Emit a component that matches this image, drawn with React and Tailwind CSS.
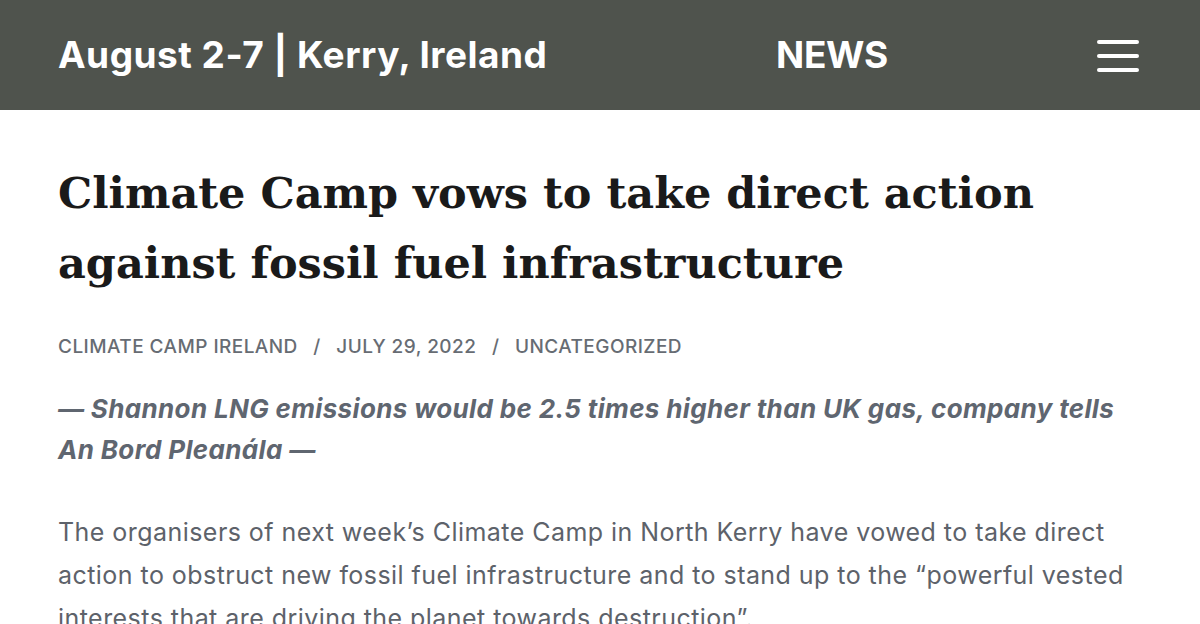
import React from "react";

const Hamburger = () => (
  <svg width="42" height="34" viewBox="0 0 42 34" fill="none">
    <line x1="2" y1="4" x2="40" y2="4" stroke="white" strokeWidth="4" strokeLinecap="round" />
    <line x1="2" y1="18" x2="40" y2="18" stroke="white" strokeWidth="4" strokeLinecap="round" />
    <line x1="2" y1="32" x2="40" y2="32" stroke="white" strokeWidth="4" strokeLinecap="round" />
  </svg>
);

export default function App() {
  return (
    <div className="w-[1200px] h-[624px] overflow-hidden bg-white font-['Inter',sans-serif]">
      {/* Header */}
      <header className="h-[110px] bg-[#4f534d] flex items-center px-[58px] text-white">
        <div className="text-[37px] font-bold tracking-[0.5px] w-[718px]">August 2-7 | Kerry, Ireland</div>
        <div className="text-[37px] font-bold tracking-[-0.3px]">NEWS</div>
        <div className="ml-auto mr-[3px]">
          <Hamburger />
        </div>
      </header>

      {/* Article */}
      <main className="px-[58px] pt-[48px]">
        <h1 className="font-['DejaVu_Serif',serif] font-bold text-[43px] leading-[70px] text-[#1a1a1a]">
          Climate Camp vows to take direct action
          <br />
          against fossil fuel infrastructure
        </h1>

        <div className="mt-[35px] text-[19px] font-medium text-[#676c73] uppercase tracking-[0.45px]">
          Climate Camp Ireland <span className="mx-[10px]">/</span> July 29, 2022{" "}
          <span className="mx-[10px]">/</span> Uncategorized
        </div>

        <p className="mt-[26px] text-[26px] leading-[41px] font-bold italic text-[#5f6670] tracking-[0.35px]">
          — Shannon LNG emissions would be 2.5 times higher than UK gas, company tells
          <br />
          An Bord Pleanála —
        </p>

        <p className="mt-[41px] text-[25px] leading-[43px] text-[#5d626a] tracking-[0.45px]">
          The organisers of next week’s Climate Camp in North Kerry have vowed to take direct
          <br />
          action to obstruct new fossil fuel infrastructure and to stand up to the “powerful vested
          <br />
          interests that are driving the planet towards destruction”.
        </p>
      </main>
    </div>
  );
}
